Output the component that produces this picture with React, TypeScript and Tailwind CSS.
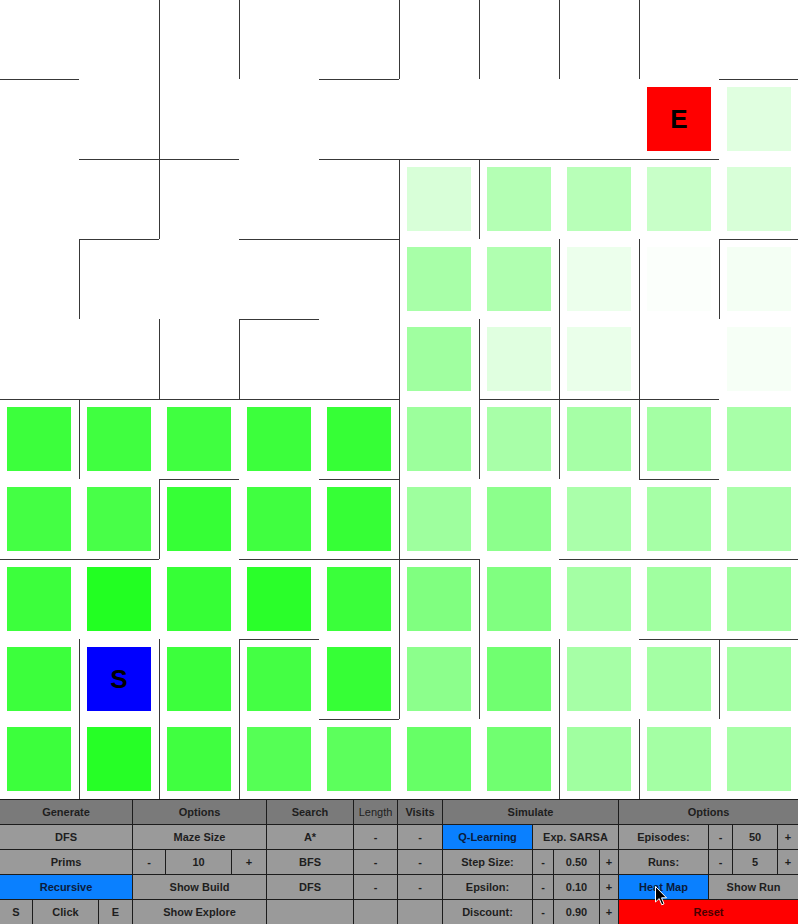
import React from 'react';

// walls: H = wall on top edge of cell (row, col); V = wall on left edge of cell (row, col)
const H_WALLS: Record<number, number[]> = {
  1: [0, 4, 9],
  2: [1, 2, 4, 5, 6, 7, 8],
  3: [1, 3, 4, 9],
  4: [3],
  5: [0, 1, 2, 3, 4, 6, 7, 8],
  6: [2, 4, 8],
  7: [0, 1, 3, 4, 5, 7, 8, 9],
  8: [3, 8, 9],
  9: [4],
};

const V_WALLS: Record<number, number[]> = {
  0: [2, 3, 5, 6, 7, 8],
  1: [2],
  2: [2, 5, 6],
  3: [1, 5, 7, 8, 9],
  4: [2, 3, 5, 6, 7, 8],
  5: [1, 5, 6, 7, 8],
  6: [2, 5],
  7: [5, 6],
  8: [1, 2, 3, 5, 6, 7, 9],
  9: [1, 2, 3, 7, 8],
};

// heat map fill per cell ('' = nothing drawn)
const HEAT: string[][] = [
  ['', '', '', '', '', '', '', '', '', ''],
  ['', '', '', '', '', '', '', '', 'E', 'bg-[#e0ffe0]'],
  ['', '', '', '', '', 'bg-[#d8ffd8]', 'bg-[#b4ffb4]', 'bg-[#b8ffb8]', 'bg-[#c8ffc8]', 'bg-[#d8ffd8]'],
  ['', '', '', '', '', 'bg-[#a8ffa8]', 'bg-[#b0ffb0]', 'bg-[#ecffec]', 'bg-[#fbfffb]', 'bg-[#f4fff4]'],
  ['', '', '', '', '', 'bg-[#a0ffa0]', 'bg-[#e0ffe0]', 'bg-[#eaffea]', '', 'bg-[#f6fff6]'],
  ['bg-[#3cff3c]', 'bg-[#40ff40]', 'bg-[#40ff40]', 'bg-[#3cff3c]', 'bg-[#36ff36]', 'bg-[#9cff9c]', 'bg-[#a8ffa8]', 'bg-[#a6ffa6]', 'bg-[#a4ffa4]', 'bg-[#a8ffa8]'],
  ['bg-[#44ff44]', 'bg-[#48ff48]', 'bg-[#36ff36]', 'bg-[#40ff40]', 'bg-[#36ff36]', 'bg-[#9eff9e]', 'bg-[#8cff8c]', 'bg-[#aaffaa]', 'bg-[#a6ffa6]', 'bg-[#aaffaa]'],
  ['bg-[#3cff3c]', 'bg-[#22ff22]', 'bg-[#36ff36]', 'bg-[#2aff2a]', 'bg-[#3aff3a]', 'bg-[#80ff80]', 'bg-[#80ff80]', 'bg-[#a4ffa4]', 'bg-[#a0ffa0]', 'bg-[#a0ffa0]'],
  ['bg-[#3cff3c]', 'S', 'bg-[#3cff3c]', 'bg-[#44ff44]', 'bg-[#36ff36]', 'bg-[#8cff8c]', 'bg-[#70ff70]', 'bg-[#a6ffa6]', 'bg-[#a4ffa4]', 'bg-[#a4ffa4]'],
  ['bg-[#3cff3c]', 'bg-[#26ff26]', 'bg-[#40ff40]', 'bg-[#55ff55]', 'bg-[#5cff5c]', 'bg-[#66ff66]', 'bg-[#70ff70]', 'bg-[#a0ffa0]', 'bg-[#a4ffa4]', 'bg-[#a6ffa6]'],
];

const wallClass = (r: number, c: number) => {
  const top = (H_WALLS[r] || []).includes(c);
  const left = (V_WALLS[r] || []).includes(c);
  if (top && left) return 'shadow-[inset_1px_1px_0_#383838]';
  if (top) return 'shadow-[inset_0_1px_0_#383838]';
  if (left) return 'shadow-[inset_1px_0_0_#383838]';
  return '';
};

const MazeCell: React.FC<{ r: number; c: number }> = ({ r, c }) => {
  const fill = HEAT[r][c];
  let inner: React.ReactNode = null;
  if (fill === 'S') {
    inner = <div className="w-16 h-16 bg-[#0000ff] flex items-center justify-center text-[26px] font-bold text-black">S</div>;
  } else if (fill === 'E') {
    inner = <div className="w-16 h-16 bg-[#ff0000] flex items-center justify-center text-[26px] font-bold text-black">E</div>;
  } else if (fill) {
    inner = <div className={`w-16 h-16 ${fill}`} />;
  }
  return <div className={`w-20 h-20 p-2 ${wallClass(r, c)}`}>{inner}</div>;
};

const Row: React.FC<{ children: React.ReactNode; className?: string }> = ({ children, className = '' }) => (
  <div className={`flex h-[25px] border-b border-[#1c1c1c] ${className}`}>{children}</div>
);

const C: React.FC<{ children?: React.ReactNode; className?: string }> = ({ children, className = '' }) => (
  <div className={`flex items-center justify-center h-full ${className}`}>{children}</div>
);

const HDR = 'bg-[#7a7a7a]';
const BODY = 'bg-[#9a9a9a]';

const App: React.FC = () => {
  return (
    <div className="relative w-[798px] h-[924px] overflow-hidden bg-white font-['Liberation_Sans',Arial,sans-serif]">
      <div className="grid grid-cols-[repeat(10,80px)] w-[800px] h-[800px] -mt-px -ml-px">
        {HEAT.map((row, r) => row.map((_, c) => <MazeCell key={`${r}-${c}`} r={r} c={c} />))}
      </div>

      <div className="flex border-t border-[#1c1c1c] text-[11px] font-bold text-[#1e1e1e]">
        {/* Generate */}
        <div className="flex flex-col w-[133px] border-r border-[#1c1c1c]">
          <Row className={HDR}><C className="flex-1">Generate</C></Row>
          <Row className={BODY}><C className="flex-1">DFS</C></Row>
          <Row className={BODY}><C className="flex-1">Prims</C></Row>
          <Row className="bg-[#0a80ff]"><C className="flex-1 text-[#0a1c3c]">Recursive</C></Row>
          <Row className={BODY}>
            <C className="w-[33px] border-r border-[#1c1c1c]">S</C>
            <C className="w-[66px] border-r border-[#1c1c1c]">Click</C>
            <C className="flex-1">E</C>
          </Row>
        </div>

        {/* Options (maze) */}
        <div className="flex flex-col w-[134px] border-r border-[#1c1c1c]">
          <Row className={HDR}><C className="flex-1">Options</C></Row>
          <Row className={BODY}><C className="flex-1">Maze Size</C></Row>
          <Row className={BODY}>
            <C className="w-[33px] border-r border-[#1c1c1c]">-</C>
            <C className="w-[66px] border-r border-[#1c1c1c]">10</C>
            <C className="flex-1">+</C>
          </Row>
          <Row className={BODY}><C className="flex-1">Show Build</C></Row>
          <Row className={BODY}><C className="flex-1">Show Explore</C></Row>
        </div>

        {/* Search */}
        <div className="flex flex-col w-[87px] border-r border-[#1c1c1c]">
          <Row className={HDR}><C className="flex-1">Search</C></Row>
          <Row className={BODY}><C className="flex-1">A*</C></Row>
          <Row className={BODY}><C className="flex-1">BFS</C></Row>
          <Row className={BODY}><C className="flex-1">DFS</C></Row>
          <Row className={BODY}><C className="flex-1" /></Row>
        </div>

        {/* Length */}
        <div className="flex flex-col w-[44px] border-r border-[#1c1c1c]">
          <Row className={HDR}><C className="flex-1 font-normal">Length</C></Row>
          <Row className={BODY}><C className="flex-1">-</C></Row>
          <Row className={BODY}><C className="flex-1">-</C></Row>
          <Row className={BODY}><C className="flex-1">-</C></Row>
          <Row className={BODY}><C className="flex-1" /></Row>
        </div>

        {/* Visits */}
        <div className="flex flex-col w-[45px] border-r border-[#1c1c1c]">
          <Row className={HDR}><C className="flex-1">Visits</C></Row>
          <Row className={BODY}><C className="flex-1">-</C></Row>
          <Row className={BODY}><C className="flex-1">-</C></Row>
          <Row className={BODY}><C className="flex-1">-</C></Row>
          <Row className={BODY}><C className="flex-1" /></Row>
        </div>

        {/* Simulate */}
        <div className="flex flex-col w-[176px] border-r border-[#1c1c1c]">
          <Row className={HDR}><C className="flex-1">Simulate</C></Row>
          <Row className={BODY}>
            <C className="w-[90px] border-r border-[#1c1c1c] bg-[#0a80ff] text-[#0a1c3c]">Q-Learning</C>
            <C className="flex-1">Exp. SARSA</C>
          </Row>
          {[
            ['Step Size:', '0.50'],
            ['Epsilon:', '0.10'],
            ['Discount:', '0.90'],
          ].map(([label, val]) => (
            <Row key={label} className={BODY}>
              <C className="w-[90px] border-r border-[#1c1c1c]">{label}</C>
              <C className="w-[21px] border-r border-[#1c1c1c]">-</C>
              <C className="w-[46px] border-r border-[#1c1c1c]">{val}</C>
              <C className="flex-1">+</C>
            </Row>
          ))}
        </div>

        {/* Options (simulation) */}
        <div className="flex flex-col flex-1">
          <Row className={HDR}><C className="flex-1">Options</C></Row>
          {[
            ['Episodes:', '50'],
            ['Runs:', '5'],
          ].map(([label, val]) => (
            <Row key={label} className={BODY}>
              <C className="w-[90px] border-r border-[#1c1c1c]">{label}</C>
              <C className="w-[24px] border-r border-[#1c1c1c]">-</C>
              <C className="w-[45px] border-r border-[#1c1c1c]">{val}</C>
              <C className="flex-1">+</C>
            </Row>
          ))}
          <Row className={BODY}>
            <C className="w-[90px] border-r border-[#1c1c1c] bg-[#0a80ff] text-[#0a1c3c]">Heat Map</C>
            <C className="flex-1">Show Run</C>
          </Row>
          <Row className="bg-[#ff0000]"><C className="flex-1 text-[#4a0000]">Reset</C></Row>
        </div>
      </div>

      {/* mouse pointer */}
      <svg className="absolute left-[655px] top-[886px]" width="13" height="20" viewBox="0 0 13 20">
        <path d="M0.5 0.5 L0.5 16 L4.2 12.6 L6.8 18.8 L9 17.8 L6.5 11.8 L11.5 11.8 Z" fill="#000" stroke="#fff" strokeWidth="1" />
      </svg>
    </div>
  );
};

export default App;
